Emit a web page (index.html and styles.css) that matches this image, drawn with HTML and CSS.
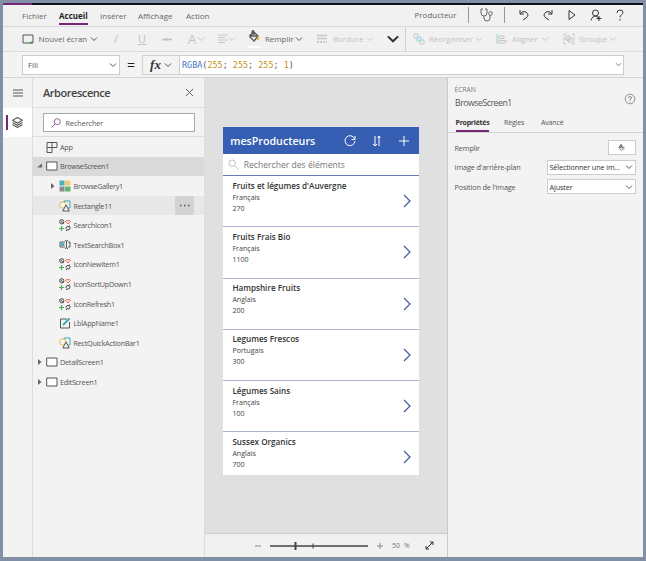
FILE: index.html
```html
<!DOCTYPE html>
<html lang="fr">
<head>
<meta charset="utf-8">
<title>mesProducteurs</title>
<link rel="stylesheet" href="styles.css">
</head>
<body>
<svg class="defs" aria-hidden="true">
  <symbol id="chev" viewBox="0 0 8 6"><path d="M1 1.5 4 4.5 7 1.5"/></symbol>
  <symbol id="screen" viewBox="0 0 12 10"><path d="M.7 1H11V9H.7Z" fill="#fff"/></symbol>
  <symbol id="bucket" viewBox="0 0 12 12"><path d="M2 5 6 2l4 4-4 5-4-4ZM4 6V2q1-3 2 0v3M2 6h7" stroke-width="1.3"/><path d="M10 6v4" stroke="#d0a52c" stroke-width="1.5"/></symbol>
  <symbol id="shapes" viewBox="0 0 12 12"><path d="M5 1h6v7H6z" stroke="#36a9b4"/><circle cx="3.7" cy="5" r="3.1" fill="#f4f4f4" stroke="#edb74f"/><path d="m7 5 3.3 6H3.8Z" fill="#f4f4f4" stroke="#555"/></symbol>
  <symbol id="icons" viewBox="0 0 12 12"><circle cx="2.8" cy="2.8" r="2.1" stroke="#444"/><path d="m1.3 1.5 3 3" stroke="#444"/><path d="M9 5 6.8 2.6q0-1.8 2.2-.8 2.2-1 2.2.8Z" stroke="#ec6d52"/><path d="M2.5 7v5M0 9.5h5" stroke="#4bab56" stroke-width="1.2"/><path d="M7 9q0-2 3.5-1.5V6.5M11 9q0 2.5-3.5 2v1M7 9v1M11 8v1" stroke="#444"/></symbol>
  <symbol id="next" viewBox="0 0 8 14"><path d="m1 1 6 6-6 6"/></symbol>
</svg>
<div class="app">
  <div class="strip"></div>
  <nav class="menu">
    <span>Fichier</span><b>Accueil</b><span>Insérer</span><span>Affichage</span><span>Action</span><span class="name">Producteur</span>
    <i class="sep"></i>
    <svg class="steth" viewBox="0 0 14 14"><path d="M3 1H1v4q0 3 3 3t3-3V1H5M4 8v2q0 3 3 3t3-3V7"/><circle cx="10.5" cy="5.5" r="1.8"/></svg>
    <i class="sep"></i>
    <svg viewBox="0 0 12 12"><path d="M2 1v4h4M2 5q3-4 6-2 4 3 0 6l-3 2"/></svg>
    <svg viewBox="0 0 12 12"><path d="M10 1v4H6M10 5Q7 1 4 3 0 6 4 9l3 2"/></svg>
    <svg viewBox="0 0 12 12"><path d="m3 1.5 6 4.5-6 4.5Z"/></svg>
    <svg viewBox="0 0 12 12"><circle cx="5.5" cy="4" r="3"/><path d="M1 11.5Q2 7 6 7l3 2M9 7v5M6.5 9.5h5"/></svg>
    <svg viewBox="0 0 12 12"><path d="M3 4q0-3 3-3t3 2.5C9 5.500 6 5.500 6 8.500M6 10v1.500"/></svg>
  </nav>
  <div class="tools">
    <svg class="i12" viewBox="0 0 12 10"><path d="M1 1h10v8H1z"/><path d="M7 8.500h4M10 7v3" stroke="#43a047"/></svg>
    <span class="t">Nouvel écran</span><svg class="chev"><use href="#chev"/></svg>
    <span class="dim big">/</span><span class="dim big under">U</span><span class="dim small">abc</span><span class="dim font">A</span><svg class="chev dim"><use href="#chev"/></svg>
    <svg class="i12 dim" viewBox="0 0 12 10"><path d="M0 1h10M0 3.500h7M0 6h10M0 8.500h7"/></svg><svg class="chev dim"><use href="#chev"/></svg>
    <span class="fillicon"><svg class="i12"><use href="#bucket"/></svg></span><span class="t">Remplir</span><svg class="chev"><use href="#chev"/></svg>
    <svg class="i12 dim" viewBox="0 0 12 10"><path d="M0 1.500h10M0 4.500h10" stroke-width="1.5"/><path d="M0 8h10" stroke-width="2" stroke-dasharray="2 1"/></svg><span class="t dim">Bordure</span><svg class="chev dim"><use href="#chev"/></svg>
    <svg class="more" viewBox="0 0 10 7"><path d="m.5 1.200 4.500 4.300 4.500-4.300"/></svg>
    <i class="vline"></i>
    <svg class="i12 dim" viewBox="0 0 12 12"><path d="M1 1h4v4H1zM7 7h4v4H7z"/><path d="M4 4h4v4H4z" stroke="#9bd4dd" fill="#d5edf0"/></svg><span class="t dim">Réorganiser</span><svg class="chev dim"><use href="#chev"/></svg>
    <svg class="i12 dim" viewBox="0 0 12 12"><path d="M1 1v10" stroke="#9bd4dd"/><path d="M3 3h5v2.500H3zM3 7.500h7V10H3z"/></svg><span class="t dim">Aligner</span><svg class="chev dim"><use href="#chev"/></svg>
    <svg class="i12 dim" viewBox="0 0 12 12"><path d="M1 3V1h2M9 1h2v2M11 9v2H9M3 11H1V9" /><path d="M3 3h4v4H3zM5 5h4v4H5zM1 4v4M11 4v4"/></svg><span class="t dim">Groupe</span><svg class="chev dim"><use href="#chev"/></svg>
  </div>
  <div class="formula">
    <div class="box prop"><span>Fill</span><svg class="chev"><use href="#chev"/></svg></div>
    <span class="eq">=</span>
    <div class="fx"><span>fx</span><svg class="chev"><use href="#chev"/></svg></div>
    <div class="box code"><code><em>RGBA</em>(<u>255</u>; <u>255</u>; <u>255</u>; <u>1</u>)</code><svg class="chev"><use href="#chev"/></svg></div>
  </div>
  <div class="body">
    <aside class="rail">
      <div class="burger"><svg viewBox="0 0 10 8"><path d="M0 1h10M0 4h10M0 7h10"/></svg></div>
      <div class="layers"><svg viewBox="0 0 10 10"><path d="M5 .5 9.500 3 5 5.500.5 3ZM.5 5 5 7.500 9.500 5M.5 7 5 9.500 9.500 7"/></svg></div>
    </aside>
    <section class="tree">
      <header><h2>Arborescence</h2><svg viewBox="0 0 10 10"><path d="m1 1 8 8M9 1 1 9"/></svg></header>
      <div class="find"><div><svg viewBox="0 0 10 10"><circle cx="6.300" cy="3.700" r="3"/><path d="M4 6 .5 9.500"/></svg><span>Rechercher</span></div></div>
      <ul>
        <li><i></i><svg class="i12" viewBox="0 0 12 12"><path d="M1 1.500h10v5H1zM1 6.500v5h5v-10"/></svg><span>App</span></li>
        <li class="sel"><svg class="arr" viewBox="0 0 5 5"><path d="M5 0v4H0z"/></svg><svg class="i12"><use href="#screen"/></svg><span>BrowseScreen1</span></li>
        <li class="sub"><svg class="arr" viewBox="0 0 5 6"><path d="m1 0 3.500 3L1 6z"/></svg><svg class="i12 tiles" viewBox="0 0 12 12"><path fill="#42b3b8" d="M.5.5h5v5h-5z"/><path fill="#f5ca74" d="M6 .5h5.500v5H6z"/><path fill="#8b8b8b" d="M.5 6.500h5v5h-5z"/><path fill="#63b572" d="M6 6.500h5.500v5H6z"/></svg><span>BrowseGallery1</span></li>
        <li class="sub hov"><i></i><svg class="i12"><use href="#shapes"/></svg><span>Rectangle11</span><svg class="dots" viewBox="0 0 19 19"><path d="M5 9.500h1.500M9 9.500h1.500M13 9.500h1.500"/></svg></li>
        <li class="sub"><i></i><svg class="i12"><use href="#icons"/></svg><span>SearchIcon1</span></li>
        <li class="sub"><i></i><svg class="i12" viewBox="0 0 12 12"><path d="M6 3H1v5h5M9 3h2v5H9M6 1.500q1.500 0 1.500 1v6q0 1-1.500 1M9 1.500q-1.500 0-1.500 1v6q0 1 1.500 1"/><path d="M2 5.500h3.500" stroke="#36a9b4" stroke-width="2.5"/></svg><span>TextSearchBox1</span></li>
        <li class="sub"><i></i><svg class="i12"><use href="#icons"/></svg><span>IconNewItem1</span></li>
        <li class="sub"><i></i><svg class="i12"><use href="#icons"/></svg><span>IconSortUpDown1</span></li>
        <li class="sub"><i></i><svg class="i12"><use href="#icons"/></svg><span>IconRefresh1</span></li>
        <li class="sub"><i></i><svg class="i12" viewBox="0 0 12 12"><path d="M8 2H1.500v9h9V5"/><path d="m4 8 6.500-6.500" stroke="#36a9b4" stroke-width="2"/></svg><span>LblAppName1</span></li>
        <li class="sub"><i></i><svg class="i12"><use href="#shapes"/></svg><span>RectQuickActionBar1</span></li>
        <li><svg class="arr" viewBox="0 0 5 6"><path d="m1 0 3.500 3L1 6z"/></svg><svg class="i12"><use href="#screen"/></svg><span>DetailScreen1</span></li>
        <li><svg class="arr" viewBox="0 0 5 6"><path d="m1 0 3.500 3L1 6z"/></svg><svg class="i12"><use href="#screen"/></svg><span>EditScreen1</span></li>
      </ul>
    </section>
    <main>
      <div class="canvas">
        <div class="phone">
          <header><h1>mesProducteurs</h1>
            <svg viewBox="0 0 12 12"><path d="M10.500 3.500A5 5 0 1 0 11 6M11 1v3.500H7.500"/></svg>
            <svg viewBox="0 0 12 12"><path d="M4 1v10M2 9l2 2 2-2M8 11V1M6.500 3 8 1l1.500 2"/></svg>
            <svg viewBox="0 0 12 12"><path d="M6 1v10M1 6h10"/></svg>
          </header>
          <div class="search"><svg viewBox="0 0 12 12"><circle cx="4.500" cy="4.500" r="3.500"/><path d="m7 7 4.500 4.500"/></svg><span>Rechercher des éléments</span></div>
          <article><div><h3>Fruits et légumes d'Auvergne</h3><p>Français</p><p>270</p></div><svg><use href="#next"/></svg></article>
          <article><div><h3>Fruits Frais Bio</h3><p>Français</p><p>1100</p></div><svg><use href="#next"/></svg></article>
          <article><div><h3>Hampshire Fruits</h3><p>Anglais</p><p>200</p></div><svg><use href="#next"/></svg></article>
          <article><div><h3>Legumes Frescos</h3><p>Portugais</p><p>300</p></div><svg><use href="#next"/></svg></article>
          <article><div><h3>Légumes Sains</h3><p>Français</p><p>100</p></div><svg><use href="#next"/></svg></article>
          <article><div><h3>Sussex Organics</h3><p>Anglais</p><p>700</p></div><svg><use href="#next"/></svg></article>
        </div>
      </div>
      <footer>
        <svg class="track" viewBox="0 0 130 12"><path d="M1 6h6M123 6h6M126 3v6" stroke="#888"/><path d="M16 6h98" stroke-width="1.300"/><path d="M41.500 2v8" stroke-width="2"/><path d="M59 3.500v5"/></svg>
        <span>50</span><span>%</span>
        <svg class="expand" viewBox="0 0 9 9"><path d="m1 8 7-7M5 1h3v3M1 5v3h3"/></svg>
      </footer>
    </main>
    <aside class="props">
      <div class="title"><div><small>ÉCRAN</small><h2>BrowseScreen1</h2></div><svg viewBox="0 0 12 12"><circle cx="6" cy="6" r="4.800"/><path d="M4.500 5q0-1.500 1.500-1.500T7.500 5Q7.500 6 6 6.500v.8M6 8.300v.8"/></svg></div>
      <div class="tabs"><b>Propriétés</b><span>Règles</span><span>Avancé</span></div>
      <div class="field"><label>Remplir</label><div class="box swatch"><svg viewBox="0 0 12 12"><use href="#bucket"/></svg></div></div>
      <div class="field"><label>Image d'arrière-plan</label><div class="box sel1"><span>Sélectionner une im...</span><svg class="chev"><use href="#chev"/></svg></div></div>
      <div class="field"><label>Position de l'image</label><div class="box sel2"><span>Ajuster</span><svg class="chev"><use href="#chev"/></svg></div></div>
    </aside>
  </div>
</div>
</body>
</html>
```
FILE: styles.css
```css
* { box-sizing: border-box; }
body { margin: 0; font: 7.3px/10px "Open Sans", "Noto Sans", sans-serif; color: #555; }
h1, h2, h3, p, ul { margin: 0; padding: 0; font-weight: normal; }
.defs { position: absolute; width: 0; height: 0; }
svg { fill: none; stroke: #555; stroke-width: 1; flex: none; }
span, h1, h2, h3, b, label, code { white-space: nowrap; }
.app { width: 646px; height: 561px; border: 3px solid #8290a6; border-bottom-width: 4px; display: flex; flex-direction: column; background: #f3f3f3; overflow: hidden; }
.strip { height: 2px; flex: none; background: linear-gradient(90deg, #742774 29px, #101018 29px); }
.i12 { width: 12px; height: 12px; }
.chev { width: 8px; height: 6px; }
.dim { color: #c2c2c2; stroke: #c6c6c6; }

.menu { height: 22px; flex: none; border-bottom: 1px solid #d9d9d9; background: #f1f1f1; padding-left: 19px; display: grid; grid-template-columns: 37px 41px 38px 48px 228.500px 53.500px 12px 23.500px 14px 24px 24px 24px 24px 14px; align-items: center; font-size: 8px; color: #666; padding-top: 1px; }
.menu b { color: #222; justify-self: start; height: 15px; line-height: 12px; border-bottom: 2px solid #742774; margin-top: 2px; }
.menu svg { width: 12px; height: 12px; stroke: #333; margin-bottom: 2px; }
.menu .name { margin-bottom: 2px; }
.menu .steth { width: 14px; height: 14px; stroke: #666; }
.sep { width: 1px; height: 16px; background: #999; margin-bottom: 2px; }

.tools { height: 25px; flex: none; border-bottom: 1px solid #d9d9d9; background: #f1f1f1; padding-left: 19px; display: grid; grid-template-columns: 16.500px 51.500px 24px 24px 24px 26px 9px 21px 10px 20px 17px 30px 22px 16px 33px 21px 18px 8px 16px 46px 21px 16px 29px 22px 16px 30px 8px; align-items: center; font-size: 7.900px; color: #666; }
.big { font-size: 11px; }
.under { text-decoration: underline; }
.small { font-size: 6px; text-decoration: line-through; }
.font { font-size: 13px; }
.fillicon { display: grid; width: 13px; height: 18px; border-bottom: 2px solid #fff; }
.more { width: 12px; height: 8px; stroke: #333; stroke-width: 1.800; }
.vline { width: 1px; height: 24px; background: #d2d2d2; }

.formula { height: 26px; flex: none; border-bottom: 1px solid #d5d5d5; padding-left: 19px; display: flex; align-items: center; }
.box { background: #fff; border: 1px solid #ccc; display: flex; align-items: center; justify-content: space-between; }
.prop { width: 98px; height: 20px; padding: 0 2px 0 5px; font-size: 7.900px; }
.eq { width: 22px; text-align: center; font-size: 14px; color: #222; }
.fx { width: 37px; height: 20px; border: 1px solid #d2d2d2; display: flex; align-items: center; justify-content: center; gap: 3px; border-right: 0; }
.fx span { font: italic bold 13px "Liberation Serif", serif; color: #333; }
.code { width: 445px; height: 20px; padding: 0 1px 0 2px; }
.code code { font: 8.450px "DejaVu Sans Mono", monospace; }
.code em { font-style: normal; color: #4473c5; }
.code u { text-decoration: none; color: #c88f1a; }
.code .chev { width: 7px; height: 5px; }

.body { flex: 1; display: flex; min-height: 0; }
.rail { width: 30px; border-right: 1px solid #ddd; }
.burger { height: 30px; display: grid; place-items: center; }
.burger svg { width: 10px; height: 8px; }
.layers { height: 29px; background: #fff; display: flex; align-items: center; position: relative; padding-left: 9px; }
.layers::before { content: ""; position: absolute; left: 3px; top: 7px; width: 2px; height: 15px; background: #742774; }
.layers svg { width: 11px; height: 11px; }
.tree { width: 172px; border-right: 1px solid #ddd; }
.tree header { height: 30px; display: flex; align-items: center; justify-content: space-between; padding: 0 10.500px 0 10px; border-bottom: 1px solid #ddd; }
.tree h2 { font-size: 11px; font-weight: 600; letter-spacing: -.45px; color: #444; }
.tree header svg { width: 9px; height: 9px; }
.find { height: 29px; padding: 5px 10px; border-bottom: 1px solid #ddd; }
.find div { width: 152px; height: 19px; background: #fff; border: 1px solid #aaa; display: flex; align-items: center; gap: 4.500px; padding-left: 7px; letter-spacing: -.1px; }
.find svg { width: 10px; height: 10px; stroke: #955c96; }
.tree ul { list-style: none; letter-spacing: -.27px; }
.tree li { height: 19.600px; display: grid; grid-template-columns: 9px 14.500px 1fr; align-items: center; padding-left: 3.500px; }
.tree .sub { grid-template-columns: 9px 14.500px 1fr 19px; padding: 0 10px 0 17px; }
.sel { background: #dadada; }
.hov { background: #e8e8e8; }
.arr { width: 5px; height: 6px; fill: #666; stroke: none; }
.tree .tiles { stroke: none; }
.dots { width: 19px; height: 19px; background: #d3d3d3; stroke-width: 1.500; }

main { width: 241.500px; display: flex; flex-direction: column; background: #e0e0e0; }
.canvas { flex: 1; padding: 49px 0 0 17.700px; }
.phone { width: 196px; height: 348px; background: #fff; overflow: hidden; }
.phone header { height: 27px; background: #365fb3; color: #fff; display: grid; grid-template-columns: 114px 27px 27px 14px; align-items: center; padding-left: 7.500px; }
.phone h1 { font-size: 10.700px; font-weight: 600; }
.phone header svg { width: 12px; height: 12px; stroke: #fff; }
.search { height: 22px; border-bottom: 1px solid #697bb3; display: flex; align-items: center; gap: 5px; padding-left: 5px; font-size: 8.600px; color: #777; }
.search svg { width: 11px; height: 11px; stroke: #bbb; }
article { height: 51.300px; border-bottom: 1px solid #aab3d3; display: flex; justify-content: space-between; padding: 3.500px 7.500px 0 9.700px; color: #444; }
article:last-child { border-bottom: 0; }
h3 { font-size: 8.130px; font-weight: 600; color: #333; line-height: 11px; }
article p { line-height: 10px; font-size: 7.100px; }
article p:nth-child(2) { line-height: 12px; }
article svg { width: 8px; height: 14px; margin-top: 14.500px; stroke: #4256a5; stroke-width: 1.200; }
footer { height: 24px; border-top: 1px solid #ccc; background: #f1f1f1; display: grid; grid-template-columns: 138px 12px 21px 10px; align-items: center; padding-left: 49px; font-size: 6.800px; color: #777; }
.track { width: 130px; height: 12px; stroke: #444; }
.expand { width: 9px; height: 9px; stroke: #333; }

.props { width: 196.500px; border-left: 1px solid #c9c9c9; }
.title { height: 36px; display: flex; justify-content: space-between; padding: 7px 7px 0 7px; }
.title small { display: block; font-size: 6.700px; line-height: 10px; color: #777; }
.title h2 { font-size: 8.700px; line-height: 17px; padding-left: .5px; letter-spacing: -.45px; }
.title svg { width: 12px; height: 12px; margin-top: 8px; stroke: #777; stroke-width: .8; }
.tabs { height: 19px; border-bottom: 1px solid #d5d5d5; display: grid; grid-template-columns: 48.500px 37px 40px; padding-left: 8px; font-size: 7px; letter-spacing: -.15px; line-height: 18px; }
.tabs b { color: #333; border-bottom: 2px solid #742774; justify-self: start; height: 18px; letter-spacing: -.25px; }
.field { height: 19.600px; display: flex; align-items: center; justify-content: space-between; padding: 0 7.500px 0 7px; letter-spacing: -.15px; }
.tabs + .field { margin-top: 5px; }
.field .box { height: 15px; width: 89px; padding: 0 2px; color: #333; }
.field .swatch { width: 28px; justify-content: center; }
.swatch svg { width: 7px; height: 7px; }
```
